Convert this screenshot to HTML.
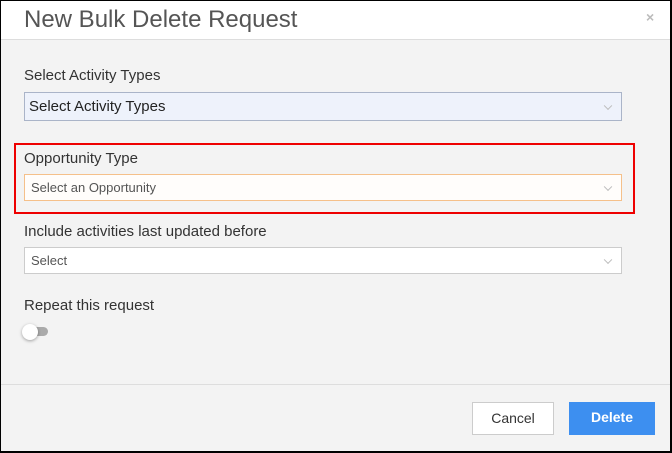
<!DOCTYPE html>
<html><head><meta charset="utf-8"><style>
*{box-sizing:border-box;margin:0;padding:0}
body{width:672px;height:453px;overflow:hidden;font-family:"Liberation Sans",sans-serif;background:#000}
.page{position:absolute;left:1px;top:1px;width:669px;height:450px;background:#f3f3f3}
.hdr{position:absolute;left:0;top:0;width:669px;height:39px;background:#fff;border-bottom:1px solid #ddd}
.title{position:absolute;left:23px;top:5px;font-size:24px;color:#555}
.x{position:absolute;left:645px;top:8px;font-size:14px;color:#bbb;font-weight:bold}
.lbl{position:absolute;left:23px;font-size:15px;color:#333}
.sel{position:absolute;left:23px;width:598px;border:1px solid #ccc;background:#fff;font-size:13px;color:#555;padding-left:6px}
.sel::after{content:"";position:absolute;right:10px;top:50%;width:5px;height:5px;border-right:1px solid #bbb;border-bottom:1px solid #bbb;transform:translateY(-70%) rotate(45deg)}
.red{position:absolute;left:13px;top:142px;width:621px;height:71px;border:2px solid #e00}
.ftr{position:absolute;left:0;top:383px;width:669px;height:1px;background:#ddd}
.btn{position:absolute;top:401px;height:33px;font-size:14px;text-align:center;line-height:31px}
</style></head><body><div class="page">
<div class="hdr"><div class="title">New Bulk Delete Request</div><div class="x">×</div></div>
<div class="lbl" style="top:66px">Select Activity Types</div>
<div class="sel" style="top:91px;height:29px;line-height:27px;background:#eef2fb;border-color:#aab4c8;font-size:15px;color:#222;padding-left:4px">Select Activity Types</div>
<div class="red"></div>
<div class="lbl" style="top:149px">Opportunity Type</div>
<div class="sel" style="top:173px;height:27px;line-height:25px;border-color:#f5c08a;background:#fffdfb">Select an Opportunity</div>
<div class="lbl" style="top:222px">Include activities last updated before</div>
<div class="sel" style="top:246px;height:27px;line-height:25px">Select</div>
<div class="lbl" style="top:296px">Repeat this request</div>
<div style="position:absolute;left:25px;top:326px;width:22px;height:9px;border-radius:5px;background:#aaa"></div>
<div style="position:absolute;left:21px;top:323px;width:16px;height:16px;border-radius:8px;background:#fff;box-shadow:0 1px 3px rgba(0,0,0,.35)"></div>
<div class="ftr"></div>
<div class="btn" style="left:471px;width:82px;background:#fff;border:1px solid #ccc;color:#333">Cancel</div>
<div class="btn" style="left:568px;width:86px;background:#3d8ff0;color:#fff;font-weight:bold">Delete</div>
</div></body></html>
